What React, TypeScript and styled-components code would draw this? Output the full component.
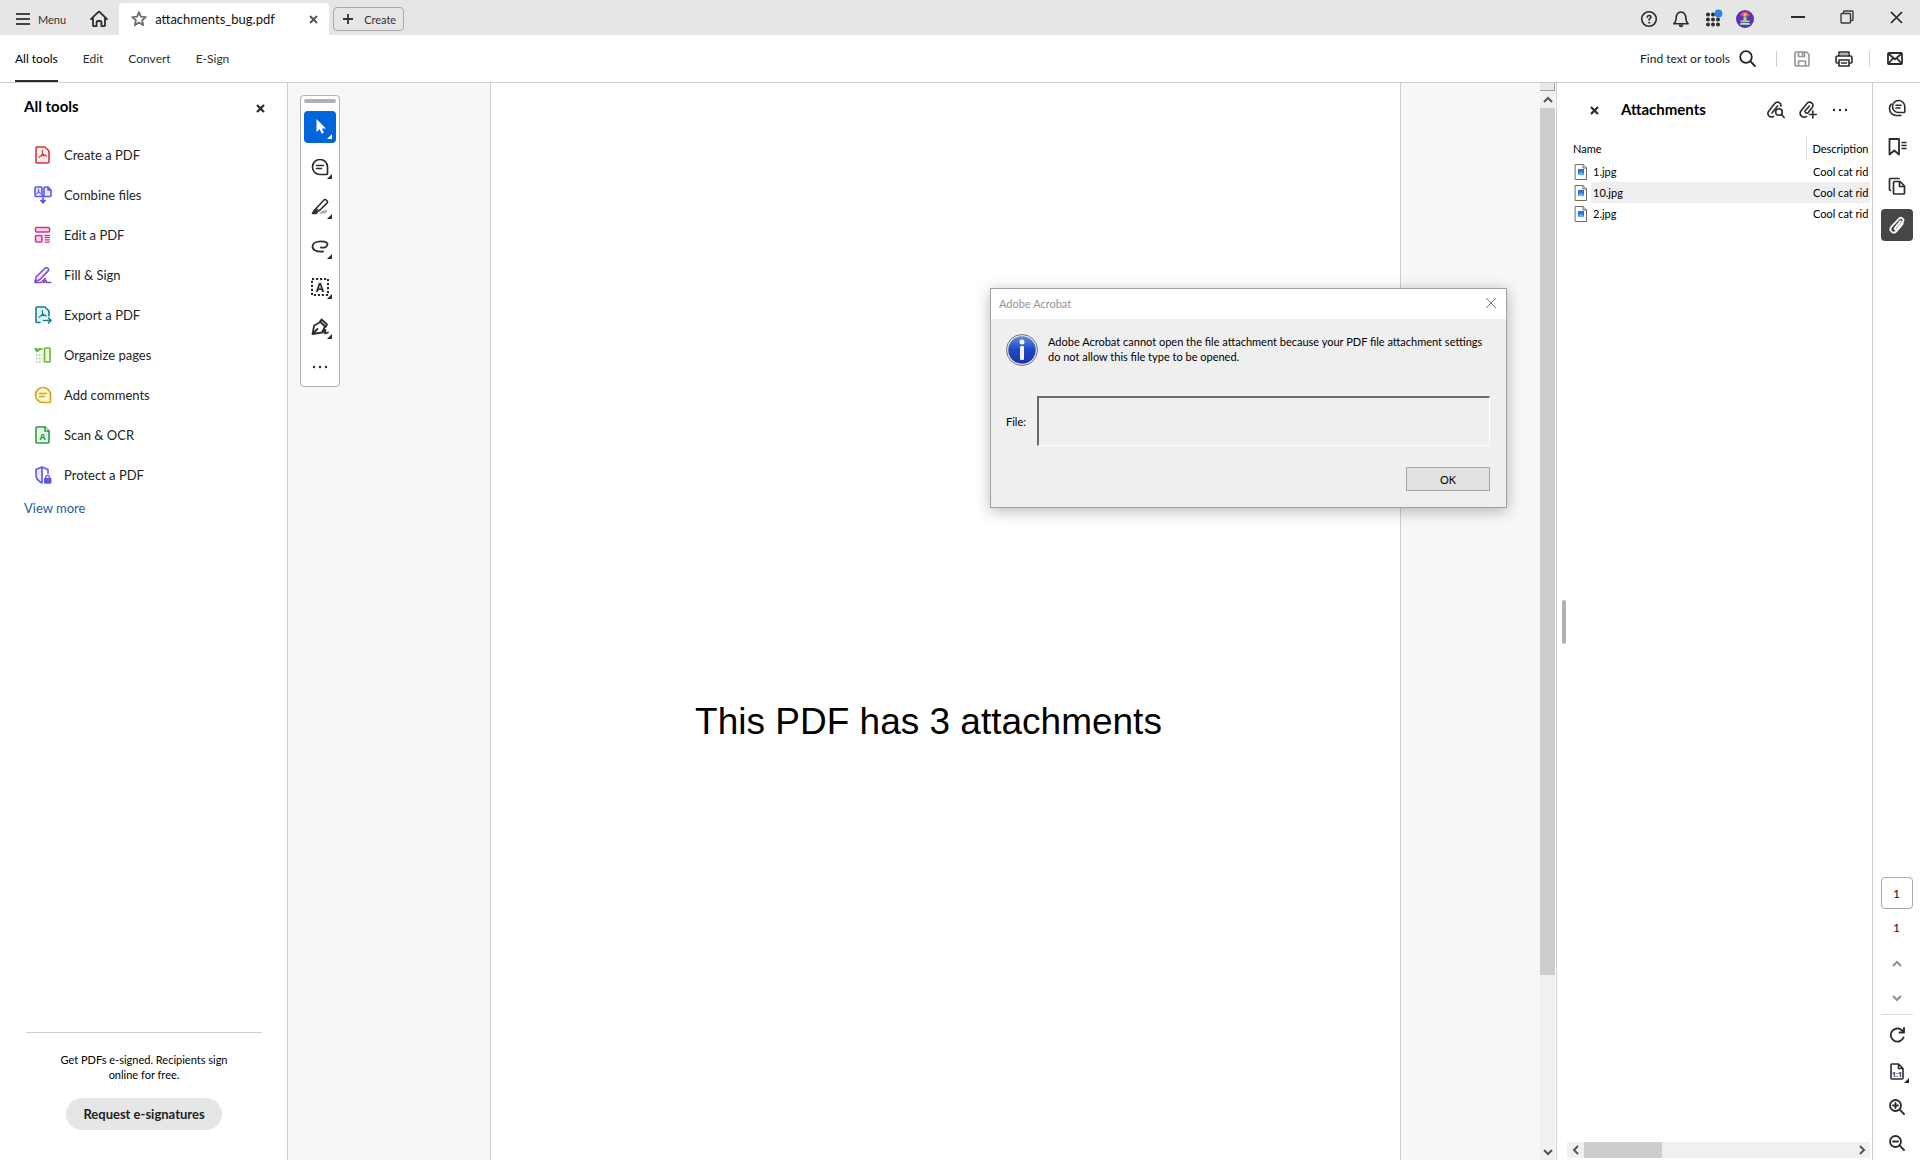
import React from 'react';
import styled, { createGlobalStyle, css } from 'styled-components';

const sans = '"Lato", "Noto Sans", sans-serif';
const ink = '#2c2c2c';

const GlobalStyle = createGlobalStyle`
  *, *::before, *::after { box-sizing: border-box; }
  body { margin: 0; font-family: ${sans}; color: #111; background: #fff; }
  button, input { font-family: inherit; color: inherit; }
  h1, h2, p, ul { margin: 0; padding: 0; }
  ul { list-style: none; }
  svg { display: block; flex: none; overflow: visible; }
`;

/* ---------- shared parts ---------- */

const Window = styled.div`
  position: relative;
  display: flex;
  flex-direction: column;
  height: 100vh;
  overflow: hidden;
`;

const IconButton = styled.button<{ $w?: number; $h?: number }>`
  display: flex;
  align-items: center;
  justify-content: center;
  flex: none;
  width: ${p => p.$w ?? 32}px;
  height: ${p => p.$h ?? p.$w ?? 32}px;
  padding: 0;
  border: 0;
  border-radius: 4px;
  background: transparent;
  color: ${ink};
`;

const Spacer = styled.div`
  flex: 1;
`;

/* ---------- title bar ---------- */

const TitleBar = styled.header`
  display: flex;
  align-items: center;
  flex: none;
  height: 35px;
  padding: 3px 8px 0 16px;
  background: #e6e6e6;
`;

const MenuButton = styled.button`
  display: flex;
  align-items: center;
  gap: 8px;
  height: 32px;
  padding: 0;
  border: 0;
  background: transparent;
  font-size: 11px;
  color: #333;
`;

const HomeLink = styled.a`
  display: flex;
  margin: 0 11px 0 24px;
  color: ${ink};
`;

const FileTab = styled.div`
  display: flex;
  align-items: center;
  width: 210px;
  height: 32px;
  padding: 0 4px 0 12px;
  border-radius: 4px 4px 0 0;
  background: #fff;
  font-size: 13px;
`;

const FileName = styled.span`
  flex: 1;
  padding-left: 8px;
`;

const CreateButton = styled.button`
  display: flex;
  align-items: center;
  gap: 11px;
  height: 24px;
  margin-left: 4px;
  padding: 0 7px 0 9px;
  border: 1px solid #a8a8a8;
  border-radius: 4px;
  background: transparent;
  font-size: 11px;
  color: #333;
`;

const StatusIcons = styled.div`
  display: flex;
  margin-right: 21px;
`;

const WindowControls = styled.div`
  display: flex;
  gap: 17px;
  padding-bottom: 4px;
`;

/* ---------- navigation bar ---------- */

const NavBar = styled.nav`
  display: flex;
  align-items: center;
  flex: none;
  height: 48px;
  padding: 0 9px 0 15px;
  border-bottom: 1px solid #cfcfcf;
`;

const NavLinks = styled.div`
  display: flex;
  align-self: stretch;
  gap: 25px;
`;

const NavLink = styled.a<{ $active?: boolean }>`
  display: flex;
  align-items: center;
  border-top: 2px solid transparent;
  border-bottom: 2px solid ${p => (p.$active ? ink : 'transparent')};
  font-size: 12px;
  color: ${p => (p.$active ? '#000' : '#2f2f2f')};
  text-decoration: none;
`;

const FindButton = styled.button`
  display: flex;
  align-items: center;
  gap: 9px;
  padding: 0;
  border: 0;
  background: transparent;
  font-size: 12px;
  color: #222;
`;

const NavDivider = styled.div<{ $before: number; $after: number }>`
  width: 1px;
  height: 16px;
  margin: 0 ${p => p.$after}px 0 ${p => p.$before}px;
  background: #cfcfcf;
`;

/* ---------- tools panel ---------- */

const Body = styled.div`
  display: flex;
  flex: 1;
  min-height: 0;
`;

const ToolsPanel = styled.aside`
  display: flex;
  flex-direction: column;
  width: 288px;
  flex: none;
  border-right: 1px solid #cfcfcf;
`;

const ToolsHeader = styled.div`
  display: flex;
  justify-content: space-between;
  padding: 13px 17px 0 24px;
`;

const PanelTitle = styled.h2`
  font-size: 15px;
  line-height: 20px;
  font-weight: 700;
  color: #000;
`;

const ToolList = styled.ul`
  padding: 15px 0 0 34px;
`;

const ToolButton = styled.button`
  display: flex;
  align-items: center;
  gap: 12px;
  height: 40px;
  padding: 0;
  border: 0;
  background: transparent;
  font-size: 13px;
  color: #222;
`;

const ViewMore = styled.a`
  padding: 4px 24px;
  font-size: 13px;
  line-height: 18px;
  color: #1c5ba0;
  text-decoration: none;
`;

const Promo = styled.section`
  display: flex;
  flex-direction: column;
  align-items: center;
  gap: 16px;
  margin: auto 25px 30px 26px;
  padding-top: 19px;
  border-top: 1px solid #cfcfcf;
`;

const PromoText = styled.p`
  width: 190px;
  font-size: 11px;
  line-height: 15px;
  text-align: center;
  color: #000;
`;

const PillButton = styled.button`
  height: 32px;
  padding: 0 17px;
  border: 0;
  border-radius: 16px;
  background: #e6e6e6;
  font-size: 13px;
  font-weight: 700;
  color: #222;
`;

/* ---------- document ---------- */

const Canvas = styled.main`
  display: grid;
  grid-template-columns: 202fr 911fr 139fr;
  flex: 1;
  min-width: 0;
  background: #f7f7f7;
`;

const Gutter = styled.div`
  padding: 12px;
`;

const Page = styled.article`
  display: flex;
  justify-content: center;
  padding: 615px 34px 0 0;
  border: solid #cfcfcf;
  border-width: 0 1px;
  background: #fff;
`;

const PageText = styled.p`
  font-family: "Liberation Sans", Arial, sans-serif;
  font-size: 37px;
  line-height: 48px;
  color: #000;
  white-space: nowrap;
`;

const QuickTools = styled.div`
  display: flex;
  flex-direction: column;
  align-items: center;
  width: 40px;
  padding: 3px;
  border: 1px solid #b1b1b1;
  border-radius: 4px;
  background: #fff;
`;

const Grip = styled.div`
  width: 32px;
  height: 4px;
  border-radius: 2px;
  background: #b1b1b1;
`;

const QuickList = styled.div`
  display: flex;
  flex-direction: column;
  gap: 8px;
  padding-top: 8px;
`;

const QuickButton = styled(IconButton)<{ $active?: boolean }>`
  position: relative;
  ${p => p.$active && css`
    background: #0265dc;
    color: #fff;
  `}
`;

const Corner = styled.span`
  position: absolute;
  right: 4px;
  bottom: 4px;
  border: solid transparent;
  border-width: 0 0 5px 5px;
  border-bottom-color: currentColor;
`;

const VerticalScroll = styled.div`
  display: flex;
  flex-direction: column;
  flex: none;
  width: 15px;
  background: #f0f0f0;
`;

const SplitBox = styled.div`
  height: 8px;
  border: solid #a0a0a0;
  border-width: 0 1px 1px 0;
  background: #e8e8e8;
`;

const VerticalThumb = styled.div`
  flex: 867 0 0;
  background: #cdcdcd;
`;

const VerticalRest = styled.div`
  flex: 168 0 0;
`;

/* ---------- attachments ---------- */

const AttachmentPanel = styled.aside`
  display: flex;
  flex: none;
  width: 317px;
  margin-left: 1px;
  border: solid #cfcfcf;
  border-width: 0 1px;
`;

const Splitter = styled.div`
  align-self: center;
  width: 4px;
  height: 44px;
  margin: 0 1px 0 5px;
  border-radius: 2px;
  background: #b1b1b1;
`;

const AttachmentMain = styled.div`
  display: flex;
  flex: 1;
  flex-direction: column;
  min-width: 0;
  padding: 0 2px 2px 0;
`;

const AttachmentHeader = styled.div`
  display: flex;
  align-items: center;
  height: 52px;
  padding: 2px 14px 0 11px;
`;

const AttachmentTitle = styled(PanelTitle)`
  flex: 1;
  padding: 0 0 2px 11px;
`;

const FileTable = styled.table`
  width: 100%;
  border-collapse: collapse;
  table-layout: fixed;
  font-size: 11px;
  color: #000;
`;

const HeadCell = styled.th<{ $ruled?: boolean }>`
  height: 26px;
  padding: 0 0 0 6px;
  border-left: ${p => (p.$ruled ? '1px solid #e0e0e0' : '0')};
  font-weight: 400;
  text-align: left;
`;

const Cell = styled.td`
  height: 21px;
  padding: 0;
  overflow: hidden;
  white-space: nowrap;
`;

const FileRow = styled.tr<{ $selected?: boolean }>`
  ${Cell} span, ${Cell}:last-child {
    background: ${p => (p.$selected ? '#eeeeee' : 'transparent')};
  }
`;

const FileCell = styled.div`
  display: flex;
  align-items: center;
  gap: 4px;
  padding-left: 8px;
`;

const FileLabel = styled.span`
  flex: 1;
  padding-left: 2px;
  line-height: 21px;
`;

const Description = styled.div`
  padding-left: 7px;
  overflow: hidden;
`;

const HorizontalScroll = styled.div`
  display: flex;
  align-items: center;
  height: 16px;
  margin-top: auto;
  background: #f0f0f0;
`;

const HorizontalThumb = styled.div`
  width: 78px;
  height: 16px;
  background: #cdcdcd;
`;

/* ---------- right rail ---------- */

const Rail = styled.aside`
  display: flex;
  flex-direction: column;
  align-items: center;
  flex: none;
  width: 47px;
  padding: 9px 0 1px;
`;

const RailGroup = styled.div`
  display: flex;
  flex-direction: column;
  gap: 7px;
`;

const RailButton = styled(IconButton)<{ $active?: boolean }>`
  background: ${p => (p.$active ? '#464646' : 'transparent')};
  color: ${p => (p.$active ? '#fff' : ink)};
`;

const PageInput = styled.input`
  width: 32px;
  height: 32px;
  margin-top: auto;
  padding: 0;
  border: 1px solid #a8a8a8;
  border-radius: 4px;
  font-size: 12px;
  text-align: center;
`;

const PageTotal = styled.span`
  padding-top: 10px;
  font-size: 12px;
  line-height: 18px;
`;

const PageGroup = styled.div`
  display: flex;
  flex-direction: column;
  padding-top: 9px;
`;

const ZoomGroup = styled.div`
  display: flex;
  flex-direction: column;
  gap: 4px;
  padding-top: 4px;
  border-top: 1px solid #dcdcdc;
`;

/* ---------- message box ---------- */

const Dialog = styled.section`
  position: absolute;
  top: 288px;
  right: 413px;
  width: 517px;
  border: 1px solid #9f9f9f;
  background: #efefef;
  box-shadow: 0 3px 14px rgba(0, 0, 0, 0.28);
  font-size: 11px;
  color: #000;
`;

const DialogTitle = styled.header`
  display: flex;
  align-items: center;
  justify-content: space-between;
  height: 30px;
  padding: 0 4px 2px 8px;
  background: #fff;
  color: #959595;
`;

const DialogBody = styled.div`
  display: flex;
  flex-direction: column;
  padding: 15px 16px 16px 15px;
`;

const Message = styled.div`
  display: flex;
  gap: 10px;
`;

const MessageText = styled.p`
  line-height: 15px;
`;

const FileField = styled.label`
  display: flex;
  align-items: center;
  gap: 11px;
  padding: 30px 0 21px;
`;

const FileInput = styled.input`
  flex: 1;
  height: 50px;
  min-width: 0;
  border: solid;
  border-width: 2px 1px 1px 2px;
  border-color: #6b6b6b #fff #fff #6b6b6b;
  background: #efefef;
`;

const OkButton = styled.button`
  align-self: flex-end;
  width: 84px;
  height: 24px;
  padding: 0;
  border: 1px solid #a8a8a8;
  background: #e1e1e1;
  font-size: 11px;
  color: #000;
`;

/* ---------- icons ---------- */

type SvgProps = { s?: number; w?: number; color?: string; sw?: number; children: React.ReactNode };
const Svg = ({ s = 18, w, color = 'currentColor', sw = 1.6, children }: SvgProps) => (
  <svg width={w ?? s} height={s} viewBox={`0 0 ${w ?? s} ${s}`} fill="none" stroke={color} strokeWidth={sw}
    strokeLinecap="round" strokeLinejoin="round" aria-hidden="true">{children}</svg>
);

const Glyph = styled.text`
  font-family: "Noto Sans", sans-serif;
  font-weight: 700;
  text-anchor: middle;
  stroke: none;
`;

const Cross = ({ s, sw, color }: { s: number; sw: number; color?: string }) => (
  <Svg s={s} sw={sw} color={color}><path d={`M1 1 L${s - 1} ${s - 1} M${s - 1} 1 L1 ${s - 1}`} strokeLinecap="butt" /></Svg>
);

const MenuIcon = () => <Svg s={14} color="#444" sw={2}><path d="M0 2h14M0 7h14M0 12h14" strokeLinecap="butt" /></Svg>;
const HomeIcon = () => <Svg sw={1.8}><path d="M1 9.2 8.2 2.1a1.1 1.1 0 0 1 1.6 0L17 9.2M3 8v7.2a1 1 0 0 0 1 1h2.6v-4a1.2 1.2 0 0 1 1.2-1.2h2.4a1.2 1.2 0 0 1 1.2 1.2v4H14a1 1 0 0 0 1-1V8" /></Svg>;
const StarIcon = () => <Svg s={16} color="#6e6e6e" sw={1.8}><path d="M8 1.2l1.9 4.5 4.9.4-3.7 3.2 1.1 4.9L8 11.6l-4.2 2.6 1.1-4.9L1.2 6.1l4.9-.4z" /></Svg>;
const PlusIcon = () => <Svg s={10} sw={1.8} color="#333"><path d="M5 0v10M0 5h10" strokeLinecap="butt" /></Svg>;
const HelpIcon = () => <Svg s={16}><circle cx="8" cy="8" r="7.3" /><path d="M6.2 6.2c.2-2.4 3.8-2.3 3.7-.1 0 1.4-1.8 1.4-1.8 3" /><circle cx="8.1" cy="11.7" r=".7" fill="currentColor" strokeWidth=".5" /></Svg>;
const BellIcon = () => <Svg><path d="M1.8 13.8h14.4c-1.8-1.3-2.2-2.8-2.3-5C13.8 5 12.3 2 9 2S4.200 5 4.1 8.8c-.1 2.200-.5 3.7-2.3 5z" /><path d="M7.2 15.3a1.8 1.5 0 0 0 3.6 0z" fill="currentColor" strokeWidth="1" /></Svg>;
const AppsIcon = () => (
  <Svg s={16} w={17} sw={0}>
    {[3, 8, 13].map(y => [3, 8, 13].map(x => <circle key={`${x}-${y}`} cx={x} cy={y + 0.5} r="2" fill={ink} />))}
    <circle cx="13.5" cy="2.5" r="3.9" fill="#2b83e6" />
  </Svg>
);
const Avatar = () => (
  <Svg sw={0}>
    <circle cx="9" cy="9" r="9" fill="#5a34b4" />
    <path d="M4.500 6a4.500 4.300 0 0 1 9 0l-3 .6h-3z" fill="#e8506c" />
    <circle cx="9" cy="4.6" r="1.600" fill="#f7c24b" />
    <path d="M7.700 6.500h2.600l.5 4h3.2l-1 1.800H5l-1-1.800h3.200z" fill="#8fe07a" />
    <path d="M4.500 13h9l.5 1.800H4z" fill="#b8ef9a" />
  </Svg>
);
const SearchIcon = () => <Svg s={17} sw={1.8}><circle cx="7" cy="7" r="5.8" /><path d="M11.2 11.2 16 16" /></Svg>;
const SaveIcon = () => <Svg s={16} color="#959595"><path d="M2 1h10.500L15 3.5V14a1 1 0 0 1-1 1H2a1 1 0 0 1-1-1V2a1 1 0 0 1 1-1zM4.500 1v4.500h6V1M4.500 15v-5h7v5M8.500 2v2" /></Svg>;
const PrintIcon = () => <Svg s={16} w={18}><path d="M4 5V1h10v4M4 12H2a1 1 0 0 1-1-1V6.5A1.500 1.500 0 0 1 2.500 5h13A1.500 1.500 0 0 1 17 6.500V11a1 1 0 0 1-1 1h-2M4 9h10v6H4zM6.500 12h5" /><path d="M5 3h8" stroke="#999" /></Svg>;
const MailIcon = () => <Svg s={13} w={16} sw={1.8}><rect x="1" y="1" width="14" height="11" rx="1" /><path d="M1.500 1.800 8 7.200l6.500-5.400M1.500 11.500l4.500-5M14.500 11.500l-4.500-5" /></Svg>;
const MinimizeIcon = () => <Svg s={14} sw={2}><path d="M0 7h14" strokeLinecap="butt" /></Svg>;
const RestoreIcon = () => <Svg s={14} sw={1.4} color="#3a3a3a"><rect x="1" y="3.500" width="9.500" height="9.500" rx="1" /><path d="M3.500 3V2a1 1 0 0 1 1-1H12a1 1 0 0 1 1 1v7.500a1 1 0 0 1-1 1h-1" /></Svg>;

const docPath = 'M3 1h8l4 4v11a1 1 0 0 1-1 1H3a1 1 0 0 1-1-1V2a1 1 0 0 1 1-1z';
const trefoil = 'M8.200 4.500c1 2.600.4 4.500-3 6.800M8.500 7.500c1 1.800 2 2.600 4 2.500M6.500 10c1.700-.8 3.200-1 4.800-.8';
const bubble = 'M9 1.500a7.500 7.500 0 1 0 0 15h6.500a1 1 0 0 0 1-1V9A7.500 7.500 0 0 0 9 1.500z';

const CreatePdfIcon = () => <Svg color="#d7373f"><path d={docPath} fill="#fdebeb" /><path d={trefoil} strokeWidth="1.200" /></Svg>;
const CombineIcon = () => <Svg color="#5c5ce0"><path d="M8 10.500H2a1 1 0 0 1-1-1V2a1 1 0 0 1 1-1h5a1 1 0 0 1 1 1zM10 10.500h6a1 1 0 0 0 1-1V4l-3-3h-3a1 1 0 0 0-1 1zM14 1v3h3" fill="#e8e8ff" /><path d="M4.500 3v2.500L2.700 8M4.500 5.500l2 2" strokeWidth="1.100" /><path d="M9 9.500v7M6.800 14.500 9 17l2.200-2.500z" fill="#5c5ce0" strokeWidth="1.500" /></Svg>;
const EditIcon = () => <Svg color="#c83a93"><rect x="1.500" y="1.500" width="14" height="4.500" rx="1" fill="#fbd3ea" /><rect x="1.500" y="9.500" width="6.500" height="6.500" rx="1" fill="#fbd3ea" /><path d="M11 9.500h4.500M11 11.700h4.500M11 13.900h4.500M11 16.100h4.500" strokeWidth="1.300" /></Svg>;
const SignIcon = () => <Svg color="#864ccc"><path d="M2 11 11.200 2a1.700 1.700 0 0 1 2.500 0l.5.600a1.700 1.700 0 0 1 0 2.300L6 13.500l-4.500 2z" fill="#f0e4fc" /><path d="M1.200 16.500h6l4-4-1.500 4 2.500-1.500.5 1.500h4M1.200 14.500v2" strokeWidth="1.700" /></Svg>;
const ExportIcon = () => <Svg color="#12808a"><path d="M6 16.500H3a1 1 0 0 1-1-1V2a1 1 0 0 1 1-1h8l4 4v5" fill="#def3f4" /><path d={trefoil} strokeWidth="1.200" /><path d="M9.500 14.500H17M14.500 12l2.500 2.500-2.500 2.500" /></Svg>;
const OrganizeIcon = () => <Svg color="#6cb43f"><rect x="10.500" y="2" width="5.500" height="14" rx=".8" fill="#e9f9dd" /><path d="M2 16h6.500M2 12.500h6.500M2 9h6.500" strokeDasharray="1.500 1.500" strokeWidth="1.600" strokeLinecap="butt" opacity=".7" /><path d="M8 3c-2.500-1-4.500 0-5 2M1 2.500l1.700 3.200L5.800 4z" fill="#6cb43f" strokeWidth="1.400" /></Svg>;
const CommentIcon = ({ color, fill }: { color?: string; fill?: string }) => <Svg color={color} sw={1.7}><path d={bubble} fill={fill} /><path d="M5.500 7.500h7M5.500 10.500h5" strokeWidth="1.500" /></Svg>;
const ScanIcon = () => <Svg color="#2f9d4c"><path d={docPath} fill="#e0f5e4" /><path d="M11 1v4h4" fill="#fff" /><Glyph x="8.500" y="14" fontSize="9" fill="#2f9d4c">A</Glyph></Svg>;
const ProtectIcon = () => <Svg color="#5c5ce0"><path d="M8 1 2 3.500V9c0 4 3 6.500 6 8M8 1l6 2.500v4M8 1v16" fill="#e8e8ff" /><path d="M11.700 12.500v-1.300a1.900 1.900 0 0 1 3.800 0v1.300" strokeWidth="1.300" /><rect x="10.700" y="12.500" width="6" height="4.500" rx=".5" fill="#5c5ce0" /></Svg>;

const ArrowIcon = () => <Svg sw={0}><path d="M5.500 1v13l3.200-2.800 2 4.500 2.200-1-2-4.300h4.100z" fill="#fff" /></Svg>;
const HighlightIcon = () => <Svg><path d="M8 15.500c3-4 6-3.500 8.500-3l-2 3z" fill="#aaa" stroke="none" /><path d="M5 10.500 13 2a1.500 1.500 0 0 1 2.200 0l.8.800a1.500 1.500 0 0 1 0 2.200L8 13z" /><path d="M4 11.500 6.500 14 5 15.500H1.500z" fill="currentColor" /></Svg>;
const DrawIcon = () => <Svg sw={1.800}><path d="M10 9.500c3.500.7 6.500-.7 6.500-3.200 0-2-2.500-3-6.500-3-5 0-8.500 2-8.500 5.200 0 3.500 4 5.500 10.500 5" /></Svg>;
const AddTextIcon = () => <Svg s={18} sw={2}><rect x="1" y="1" width="16" height="16" strokeDasharray="2.200 1.800" strokeLinecap="butt" strokeLinejoin="miter" /><Glyph x="9" y="13.500" fontSize="12" fill="currentColor">A</Glyph></Svg>;
const PenIcon = () => <Svg sw={1.800}><path d="M1.500 16 3.200 7.500 9.500 4l4.500 4.500-3 6zM2 15.500l4.500-4.500M9 3.500l1.500-2 5.500 5-1.500 2.500M11.500 14.500l3-2.500-.5 3.500 3-1" /></Svg>;
const Dots = () => <Svg s={4} w={16} sw={0}>{[2, 8, 14].map(x => <circle key={x} cx={x} cy="2" r="1.200" fill={ink} />)}</Svg>;

const ClipIcon = () => <Svg sw={1.800}><path d="M12.600 5.200 7 11.800c-1 1.300.7 2.600 1.800 1.400l6-7.300c2-2.700-1.600-5.600-3.900-3L3.400 10.700c-3 3.800 1.800 8 5 4.600l6.400-7.700" /></Svg>;
const ClipSearchIcon = () => <Svg><path d="M6.500 15.500c-3.500 1.500-7-1.500-5-5L7.500 2.800C10-.6 14.600 1.800 13.800 5M5 12l5.500-7" /><circle cx="12" cy="11" r="3.300" /><path d="m14.500 13.500 2.700 3" /></Svg>;
const ClipPlusIcon = () => <Svg><path d="M7.500 15.500c-4 2-7.500-1.500-6-5L7.500 3c2.800-3.800 8.200-.6 6 3.200l-4 5c-1.500 2-4.500.3-3.200-1.700L10.500 5" /><path d="M13.800 10v7M10.300 13.500h7" /></Svg>;
const FileIcon = () => <Svg s={16} w={12} sw={1} color="#6a6a6a"><path d="M.5.500h7.500l3.500 3.500v11.500H.5zM8 .5V4h3.500" fill="#fff" /><rect x="3" y="5" width="6" height="6" fill="#2276cf" stroke="none" /><path d="m3 10 3-2.500 3 2.500v1H3z" fill="#57b4f5" stroke="none" /></Svg>;
const CommentsRailIcon = () => <Svg><path d="M10.500 1.500a6 6 0 1 0 0 12H16a.8.800 0 0 0 .8-.8V7.500a6.200 6.200 0 0 0-6.300-6z" /><path d="M8 6.200h5M8 9h4M3.200 5C0 9 1.500 16 8 16.500h5" /></Svg>;
const BookmarkIcon = () => <Svg sw={1.800}><path d="M1.500 1h9.500v15.500l-4.700-4-4.800 4z" /><path d="M14 4.500h4M14 7.500h4M14 10.500h4" strokeWidth="1.400" /></Svg>;
const PagesIcon = () => <Svg sw={1.700}><path d="M6.500 4.500H12l4.500 4.500V16a1 1 0 0 1-1 1h-9a1 1 0 0 1-1-1V5.500a1 1 0 0 1 1-1zM11.500 4.500V9.500h5M2.500 13.500a1 1 0 0 1-1-1V2.500a1 1 0 0 1 1-1H11" /></Svg>;
const Chevron = ({ dir, color = '#8e8e8e' }: { dir: 'up' | 'down' | 'left' | 'right'; color?: string }) => {
  const d = { up: 'M1 7 5 3l4 4', down: 'M1 3l4 4 4-4', left: 'M7 1 3 5l4 4', right: 'M3 1l4 4-4 4' }[dir];
  return <Svg s={10} sw={2} color={color}><path d={d} strokeLinecap="butt" strokeLinejoin="miter" /></Svg>;
};
const RotateIcon = () => <Svg s={16} sw={1.900}><path d="M14.500 10.500A6.600 6.600 0 1 1 13 3.300l1.500 1.500M15 1v4.500h-4.500" /></Svg>;
const FitIcon = () => <Svg s={17} w={14}><path d="M2 1h6.500L13 5.500V15a1 1 0 0 1-1 1H2a1 1 0 0 1-1-1V2a1 1 0 0 1 1-1zM8.500 1v4.500H13" /><Glyph x="7" y="13.500" fontSize="7" fill="currentColor">1:1</Glyph></Svg>;
const ZoomIcon = ({ plus }: { plus?: boolean }) => <Svg s={16} sw={1.800}><circle cx="6.500" cy="6.500" r="5.500" /><path d={'M10.700 10.700 15 15M4 6.500h5' + (plus ? 'M6.500 4v5' : '')} /></Svg>;
const InfoIcon = () => (
  <svg width="32" height="32" viewBox="0 0 32 32" aria-hidden="true">
    <defs>
      <linearGradient id="info" x1="0" y1="0" x2="0" y2="1">
        <stop offset="0" stopColor="#5c8be0" />
        <stop offset=".5" stopColor="#1d47c4" />
        <stop offset="1" stopColor="#1a35a8" />
      </linearGradient>
    </defs>
    <circle cx="16" cy="16" r="15.500" fill="#e4e4e4" stroke="#777" />
    <circle cx="16" cy="16" r="13.700" fill="url(#info)" />
    <circle cx="16" cy="8" r="2.500" fill="#fff" />
    <rect x="14" y="12" width="4" height="14" rx="1" fill="#f2f2f2" />
  </svg>
);

/* ---------- data ---------- */

const tools = [
  { label: 'Create a PDF', icon: <CreatePdfIcon /> },
  { label: 'Combine files', icon: <CombineIcon /> },
  { label: 'Edit a PDF', icon: <EditIcon /> },
  { label: 'Fill & Sign', icon: <SignIcon /> },
  { label: 'Export a PDF', icon: <ExportIcon /> },
  { label: 'Organize pages', icon: <OrganizeIcon /> },
  { label: 'Add comments', icon: <CommentIcon color="#d2a91c" fill="#fdf6cf" /> },
  { label: 'Scan & OCR', icon: <ScanIcon /> },
  { label: 'Protect a PDF', icon: <ProtectIcon /> },
];

const quickTools = [
  { label: 'Select', icon: <ArrowIcon />, active: true },
  { label: 'Comment', icon: <CommentIcon /> },
  { label: 'Highlight', icon: <HighlightIcon /> },
  { label: 'Draw', icon: <DrawIcon /> },
  { label: 'Add text', icon: <AddTextIcon /> },
  { label: 'Sign', icon: <PenIcon /> },
];

const files = [{ name: '1.jpg' }, { name: '10.jpg', selected: true }, { name: '2.jpg' }];

export default function App() {
  return (
    <Window>
      <GlobalStyle />
      <TitleBar>
        <MenuButton><MenuIcon />Menu</MenuButton>
        <HomeLink href="#home" aria-label="Home"><HomeIcon /></HomeLink>
        <FileTab>
          <StarIcon />
          <FileName>attachments_bug.pdf</FileName>
          <IconButton $w={24} aria-label="Close tab"><Cross s={9} sw={1.9} color="#555" /></IconButton>
        </FileTab>
        <CreateButton><PlusIcon />Create</CreateButton>
        <Spacer />
        <StatusIcons>
          <IconButton aria-label="Help"><HelpIcon /></IconButton>
          <IconButton aria-label="Notifications"><BellIcon /></IconButton>
          <IconButton aria-label="Apps"><AppsIcon /></IconButton>
          <IconButton aria-label="Account"><Avatar /></IconButton>
        </StatusIcons>
        <WindowControls>
          <IconButton $h={28} aria-label="Minimize"><MinimizeIcon /></IconButton>
          <IconButton $h={28} aria-label="Restore"><RestoreIcon /></IconButton>
          <IconButton $h={28} aria-label="Close"><Cross s={13} sw={1.6} color="#222" /></IconButton>
        </WindowControls>
      </TitleBar>

      <NavBar>
        <NavLinks>
          <NavLink href="#all" $active>All tools</NavLink>
          <NavLink href="#edit">Edit</NavLink>
          <NavLink href="#convert">Convert</NavLink>
          <NavLink href="#esign">E-Sign</NavLink>
        </NavLinks>
        <Spacer />
        <FindButton>Find text or tools<SearchIcon /></FindButton>
        <NavDivider $before={20} $after={9} />
        <IconButton aria-label="Save"><SaveIcon /></IconButton>
        <IconButton $w={51} $h={32} aria-label="Print"><PrintIcon /></IconButton>
        <NavDivider $before={0} $after={9} />
        <IconButton aria-label="Mail"><MailIcon /></IconButton>
      </NavBar>

      <Body>
        <ToolsPanel>
          <ToolsHeader>
            <PanelTitle>All tools</PanelTitle>
            <IconButton $w={20} $h={24} aria-label="Close tools"><Cross s={9} sw={2.2} /></IconButton>
          </ToolsHeader>
          <ToolList>
            {tools.map(t => (
              <li key={t.label}><ToolButton>{t.icon}{t.label}</ToolButton></li>
            ))}
          </ToolList>
          <ViewMore href="#more">View more</ViewMore>
          <Promo>
            <PromoText>Get PDFs e-signed. Recipients sign online for free.</PromoText>
            <PillButton>Request e-signatures</PillButton>
          </Promo>
        </ToolsPanel>

        <Canvas>
          <Gutter>
            <QuickTools>
              <Grip />
              <QuickList>
                {quickTools.map(q => (
                  <QuickButton key={q.label} $active={q.active} aria-label={q.label}>{q.icon}<Corner /></QuickButton>
                ))}
                <QuickButton aria-label="More tools"><Dots /></QuickButton>
              </QuickList>
            </QuickTools>
          </Gutter>
          <Page><PageText>This PDF has 3 attachments</PageText></Page>
        </Canvas>

        <VerticalScroll>
          <SplitBox />
          <IconButton $w={15} $h={17} aria-label="Scroll up"><Chevron dir="up" color="#555" /></IconButton>
          <VerticalThumb />
          <VerticalRest />
          <IconButton $w={15} $h={17} aria-label="Scroll down"><Chevron dir="down" color="#555" /></IconButton>
        </VerticalScroll>

        <AttachmentPanel>
          <Splitter />
          <AttachmentMain>
            <AttachmentHeader>
              <IconButton aria-label="Close attachments"><Cross s={9} sw={2.2} /></IconButton>
              <AttachmentTitle>Attachments</AttachmentTitle>
              <IconButton aria-label="Search attachments"><ClipSearchIcon /></IconButton>
              <IconButton aria-label="Add attachment"><ClipPlusIcon /></IconButton>
              <IconButton aria-label="Options"><Dots /></IconButton>
            </AttachmentHeader>
            <FileTable>
              <colgroup><col /><col width={64} /></colgroup>
              <thead>
                <tr><HeadCell>Name</HeadCell><HeadCell $ruled>Description</HeadCell></tr>
              </thead>
              <tbody>
                {files.map(f => (
                  <FileRow key={f.name} $selected={f.selected}>
                    <Cell><FileCell><FileIcon /><FileLabel>{f.name}</FileLabel></FileCell></Cell>
                    <Cell><Description>Cool cat rid</Description></Cell>
                  </FileRow>
                ))}
              </tbody>
            </FileTable>
            <HorizontalScroll>
              <IconButton $w={17} $h={16} aria-label="Scroll left"><Chevron dir="left" color="#555" /></IconButton>
              <HorizontalThumb />
              <Spacer />
              <IconButton $w={17} $h={16} aria-label="Scroll right"><Chevron dir="right" color="#555" /></IconButton>
            </HorizontalScroll>
          </AttachmentMain>
        </AttachmentPanel>

        <Rail>
          <RailGroup>
            <RailButton aria-label="Comments"><CommentsRailIcon /></RailButton>
            <RailButton aria-label="Bookmarks"><BookmarkIcon /></RailButton>
            <RailButton aria-label="Pages"><PagesIcon /></RailButton>
            <RailButton $active aria-label="Attachments"><ClipIcon /></RailButton>
          </RailGroup>
          <PageInput aria-label="Page number" defaultValue="1" />
          <PageTotal>1</PageTotal>
          <PageGroup>
            <RailButton $h={35} aria-label="Previous page"><Chevron dir="up" /></RailButton>
            <RailButton $h={33} aria-label="Next page"><Chevron dir="down" /></RailButton>
          </PageGroup>
          <ZoomGroup>
            <RailButton aria-label="Rotate"><RotateIcon /></RailButton>
            <QuickButton aria-label="Actual size"><FitIcon /><Corner /></QuickButton>
            <RailButton aria-label="Zoom in"><ZoomIcon plus /></RailButton>
            <RailButton aria-label="Zoom out"><ZoomIcon /></RailButton>
          </ZoomGroup>
        </Rail>
      </Body>

      <Dialog role="dialog" aria-label="Adobe Acrobat">
        <DialogTitle>
          Adobe Acrobat
          <IconButton $w={22} aria-label="Close dialog"><Cross s={12} sw={1} color="#777" /></IconButton>
        </DialogTitle>
        <DialogBody>
          <Message>
            <InfoIcon />
            <MessageText>Adobe Acrobat cannot open the file attachment because your PDF file attachment settings do not allow this file type to be opened.</MessageText>
          </Message>
          <FileField>File:<FileInput readOnly /></FileField>
          <OkButton>OK</OkButton>
        </DialogBody>
      </Dialog>
    </Window>
  );
}
